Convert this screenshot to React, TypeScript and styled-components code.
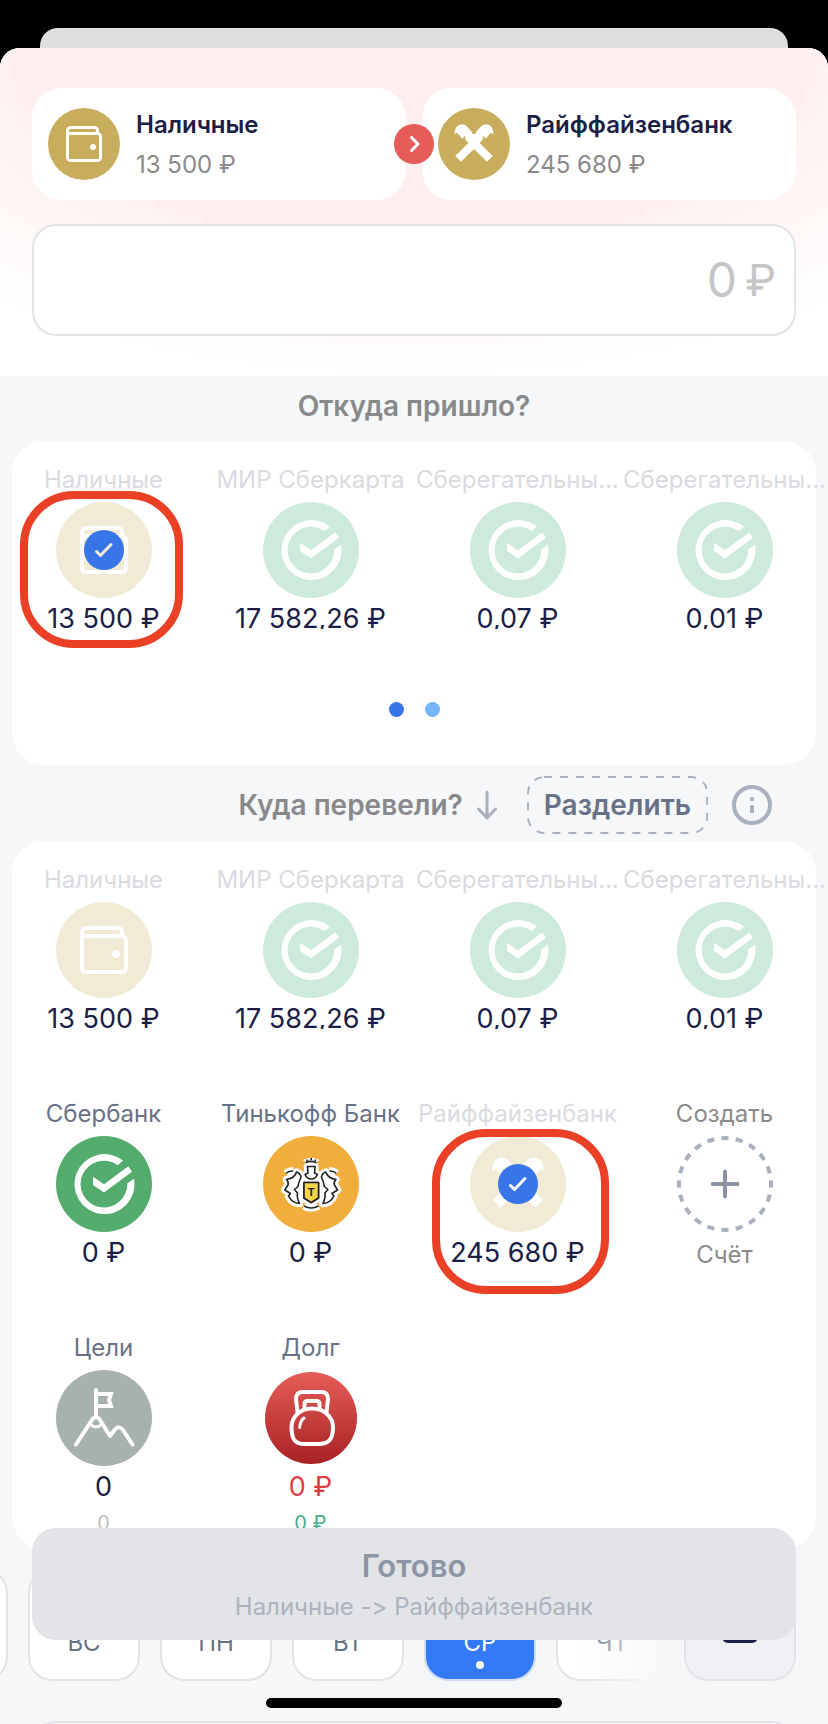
import React from "react";
import styled, { createGlobalStyle, css } from "styled-components";

const GlobalStyle = createGlobalStyle`
  * { box-sizing: border-box; }
  body {
    margin: 0;
    background: #000;
    font-family: Inter, "Noto Sans", sans-serif;
    font-variant-ligatures: none;
    font-feature-settings: "calt" 0;
    color: #1a2045;
  }
  button, input { font: inherit; font-feature-settings: inherit; color: inherit; }
  button { border: 0; padding: 0; background: none; cursor: pointer; }
`;

const Screen = styled.div`
  position: relative;
  display: flex;
  flex-direction: column;
  height: 100vh;
  padding-top: 28px;
  overflow: hidden;
  background: #000;
`;

const BackSheet = styled.div`
  flex: none;
  height: 20px;
  margin: 0 40px;
  border-radius: 18px 18px 0 0;
  background: #dfdfdf;
`;

const Sheet = styled.main`
  flex: 1;
  min-height: 0;
  overflow: hidden;
  border-radius: 20px 20px 0 0;
  background: #f6f7f9;
`;

const Header = styled.header`
  display: flex;
  flex-direction: column;
  gap: 24px;
  padding: 40px 32px;
  background: radial-gradient(ellipse 80% 100% at 50% 0, #ffeeed 0%, #ffefee 55%, #fff 100%) #fff;
`;

const Route = styled.div`
  position: relative;
  display: grid;
  grid-template-columns: 1fr 1fr;
  gap: 16px;
`;

const RouteCard = styled.button`
  display: flex;
  align-items: center;
  gap: 16px;
  height: 112px;
  padding: 0 16px;
  border-radius: 30px;
  background: #fff;
  text-align: left;
`;

const RouteText = styled.span`
  display: flex;
  flex-direction: column;
  padding-top: 2px;
  font-size: 24px;
  line-height: 40px;
  white-space: nowrap;
  color: #8a8a8c;
  strong { font-weight: 600; color: #1a2045; }
`;

const RouteArrow = styled.span`
  position: absolute;
  top: 50%;
  left: 50%;
  width: 40px;
  height: 40px;
  margin: -20px 0 0 -20px;
  border-radius: 50%;
  background: #e65c58;
  svg { display: block; }
`;

const AmountField = styled.label`
  display: flex;
  align-items: center;
  gap: 8px;
  height: 112px;
  padding: 0 18px;
  border: 2px solid #e2e3e9;
  border-radius: 24px;
  background: #fff;
  font-size: 44px;
  color: #c5c5c6;
`;

const AmountInput = styled.input`
  flex: 1;
  min-width: 0;
  padding: 0;
  border: 0;
  outline: 0;
  background: none;
  font-size: 48px;
  line-height: 60px;
  text-align: right;
  &::placeholder { color: #c5c5c6; opacity: 1; }
`;

const SectionHead = styled.div<{ $split?: boolean }>`
  display: flex;
  align-items: center;
  justify-content: ${(p) => (p.$split ? "flex-end" : "center")};
  height: ${(p) => (p.$split ? 76 : 65)}px;
  padding: ${(p) => (p.$split ? "4px 56px 0" : "0 56px 6px")};
`;

const SectionTitle = styled.h2`
  margin: 0;
  font-size: 28px;
  line-height: 36px;
  font-weight: 600;
  color: #88898b;
`;

const DownArrow = styled.svg`
  flex: none;
  margin: 0 30px 0 14px;
`;

const SplitButton = styled.button`
  position: relative;
  height: 58px;
  margin-right: 24px;
  padding: 0 17px;
  font-size: 28px;
  font-weight: 600;
  color: #687286;
`;

const DashedFrame = styled.svg`
  position: absolute;
  inset: 0;
  width: 100%;
  height: 100%;
  rect {
    width: calc(100% - 2px);
    height: calc(100% - 2px);
  }
`;

const InfoButton = styled.button`
  width: 40px;
  height: 40px;
  svg { display: block; }
`;

const Panel = styled.section<{ $paged?: boolean }>`
  margin: 0 12px;
  padding: 24px 0 ${(p) => (p.$paged ? 48 : 11)}px;
  border-radius: 32px;
  background: #fff;
`;

const AccountGrid = styled.div`
  display: grid;
  grid-template-columns: repeat(4, 1fr);
  row-gap: 70px;
  margin: 0 -12px;
`;

const Tile = styled.button`
  position: relative;
  display: flex;
  flex-direction: column;
  align-items: center;
  justify-content: flex-start;
  min-width: 0;
`;

type Tone = "normal" | "faded" | "plain";

const labelColor = { normal: "#687286", faded: "#dadbe1", plain: "#8a8b8d" };

const TileLabel = styled.span<{ $tone: Tone }>`
  height: 37px;
  font-size: 24px;
  line-height: 30px;
  white-space: nowrap;
  color: ${(p) => labelColor[p.$tone]};
`;

const TileAmount = styled.span<{ $color?: string }>`
  height: 31px;
  padding-top: 9px;
  overflow: hidden;
  font-size: 27px;
  line-height: 24px;
  white-space: nowrap;
  color: ${(p) => p.$color ?? "#1a2045"};
`;

const TileCaption = styled.span`
  height: 31px;
  font-size: 24px;
  line-height: 46px;
  color: #8a8b8d;
`;

const TileNote = styled.span<{ $color: string }>`
  margin-top: 11px;
  font-size: 20px;
  line-height: 30px;
  color: ${(p) => p.$color};
`;

const Disc = styled.span<{ $bg: string; $small?: boolean }>`
  position: relative;
  flex: none;
  display: flex;
  width: ${(p) => (p.$small ? 72 : 96)}px;
  height: ${(p) => (p.$small ? 72 : 96)}px;
  border-radius: 50%;
  background: ${(p) => p.$bg};
  svg { width: 100%; height: 100%; }
`;

const DebtDisc = styled(Disc)`
  width: 92px;
  height: 92px;
  margin: 2px 0;
`;

const Tick = styled.span`
  position: absolute;
  top: 28px;
  left: 28px;
  width: 40px;
  height: 40px;
  border-radius: 50%;
  background: #3875e9;
`;

const Marker = styled.span<{ $tall?: boolean }>`
  position: absolute;
  border: 8px solid #ea4025;
  border-radius: 54px;
  pointer-events: none;
  ${(p) =>
    p.$tall
      ? css`inset: 30px 12px auto 18px; height: 165px;`
      : css`inset: 26px 24px auto 20px; height: 157px;`}
`;

const Pager = styled.div`
  display: flex;
  justify-content: center;
  gap: 21px;
  margin-top: 73px;
`;

const Dot = styled.button<{ $active?: boolean }>`
  width: 15px;
  height: 15px;
  border-radius: 50%;
  background: ${(p) => (p.$active ? "#3875e9" : "#75b5fa")};
`;

const DateBar = styled.div`
  display: flex;
  gap: 16px;
  margin-top: 20px;
  padding-right: 32px;
`;

const Days = styled.div`
  position: relative;
  flex: 1;
  min-width: 0;
  display: flex;
  justify-content: flex-end;
  gap: 20px;
  overflow: hidden;
  &::after {
    content: "";
    position: absolute;
    inset: 0 0 0 auto;
    width: 90px;
    background: linear-gradient(90deg, #f6f7f900, #f6f7f9 90%);
  }
`;

const Day = styled.button<{ $active?: boolean }>`
  position: relative;
  flex: none;
  width: 112px;
  height: 112px;
  padding-top: 36px;
  border: 2px solid ${(p) => (p.$active ? "#cfdcf2" : "#e2e3e6")};
  border-radius: 24px;
  background: ${(p) => (p.$active ? "#347af7" : "#fff")};
  font-size: 24px;
  line-height: 30px;
  color: ${(p) => (p.$active ? "#fff" : "#687286")};
`;

const TodayDot = styled.span`
  position: absolute;
  bottom: 10px;
  left: 50%;
  width: 8px;
  height: 8px;
  margin-left: -4px;
  border-radius: 50%;
  background: #fff;
`;

const CalendarButton = styled.button`
  flex: none;
  width: 112px;
  height: 112px;
  border: 2px solid #e2e3e6;
  border-radius: 24px;
  background: #f0f1f4;
  svg { display: block; margin: auto; }
`;

const NoteCard = styled.div`
  height: 112px;
  margin: 40px 32px 0;
  border: 2px solid #e2e3e6;
  border-radius: 24px;
`;

const DoneButton = styled.button`
  position: absolute;
  right: 32px;
  bottom: 84px;
  left: 32px;
  display: flex;
  flex-direction: column;
  align-items: center;
  justify-content: center;
  height: 112px;
  padding-top: 4px;
  border-radius: 24px;
  background: #e2e4e8;
  font-size: 24px;
  line-height: 40px;
  color: #abb3bf;
  strong { font-size: 31px; line-height: 42px; font-weight: 600; color: #8c95a3; }
`;

const HomeIndicator = styled.div`
  position: absolute;
  bottom: 16px;
  left: 50%;
  width: 296px;
  height: 10px;
  margin-left: -148px;
  border-radius: 5px;
  background: #000;
`;

const Wallet = () => (
  <svg viewBox="0 0 96 96" fill="none" stroke="#fff" strokeWidth="4" aria-hidden>
    <path d="M26 34v-4a4 4 0 0 1 4-4h32a4 4 0 0 1 4 4v4M26 34h40a4 4 0 0 1 4 4v28a4 4 0 0 1-4 4H30a4 4 0 0 1-4-4z" />
    <circle cx="60" cy="52" r="4" fill="#fff" stroke="none" />
  </svg>
);

const Sber = () => (
  <svg viewBox="0 0 96 96" fill="#fff" aria-hidden>
    <path d="M67 24.5A30 30 0 1 0 78 42.7L71.3 47.3A23.4 23.4 0 1 1 61.7 29.2Z" />
    <path d="M37 40.7L48 48.3L72.3 30.3L76 35.7L48 56.4L37 49Z" />
  </svg>
);

const Raiffeisen = () => (
  <svg viewBox="0 0 96 96" fill="#fff" aria-hidden>
    <path d="M22 35C22 27 26 21.500 32 21.500C35 21.500 37.500 23 39 25L45 31.500L46 34.500H50L51 31.500L57 25C58.500 23 61 21.500 64 21.500C70 21.500 74 27 74 35L70.500 33L63.600 41L60 37L59.500 42L55.500 46.500L73 64L65.300 71.700L48 54.500L30.700 71.700L23 64L40.500 46.500L36.500 42L36 37L32.400 41L25.500 33Z" />
  </svg>
);

const TinkoffWing = () => (
  <>
    <path d="M23 37.500Q26 34.500 30 35" fill="none" />
    <path d="M33.500 36Q32 42 23.500 43.500Q26 46 25 49L21.800 54L27.500 57.500L25.500 60Q29 67 36.500 67.500Q33.500 61 34.500 57L31.500 53.500L35 50.500Q36 45 38 41Q37 37 33.500 36Z" />
  </>
);

const TinkoffLines = () => (
  <>
    <path d="M42.500 26.800Q48 24 53.500 26.800M44 23.500V25M48.200 22V24M52.400 23.500V25" fill="none" />
    <path d="M44.500 30.500H52L51.500 37L54.500 38.500Q52.500 43 48.200 43Q44 43 42 38.500L45 37Z" />
    <TinkoffWing />
    <g transform="translate(96.400 0) scale(-1 1)"><TinkoffWing /></g>
    <path d="M41 70Q48.200 74 55.500 70" fill="none" />
    <path d="M41 46.500H55.500V62L48.200 66.500L41 62Z" />
  </>
);

const Tinkoff = () => (
  <svg viewBox="0 0 96 96" strokeLinejoin="round" aria-hidden>
    <g fill="#fff" stroke="#fff" strokeWidth="7.500"><TinkoffLines /></g>
    <g fill="#fff" stroke="#202124" strokeWidth="1.600"><TinkoffLines /></g>
    <path d="M41 46.500H55.500V62L48.200 66.500L41 62Z" fill="#f3d54d" stroke="#202124" strokeWidth="1.600" />
    <text x="48.200" y="60" textAnchor="middle" fontSize="11" fontWeight="700" fill="#202124">T</text>
  </svg>
);

const Goals = () => (
  <svg viewBox="0 0 96 96" fill="none" stroke="#fff" strokeWidth="4" strokeLinecap="round" aria-hidden>
    <path d="M40 20V47M40 24H55L53 30L55 36H40" />
    <path d="M20 74.500L36 50Q40 44 44 50L54 66L59 59.500Q63 55 67 60L76.500 74.500" strokeLinejoin="round" />
    <path d="M34 54Q40 60 46 54" strokeWidth="3" />
  </svg>
);

const Kettlebell = () => (
  <svg viewBox="2 2 92 92" fill="none" stroke="#fff" strokeWidth="4" strokeLinecap="round" aria-hidden>
    <path d="M49 38.500C36 38.500 28.500 48 28.500 57C28.500 69 32 73.500 40 74H57C66 73.500 70 69 70 57C70 48 62 38.500 49 38.500Z" />
    <path d="M34.500 42L33 29C33 24 36 22 40 22H58C62 22 65 24 65 29L63.500 42" />
    <path d="M41.500 37V34Q41.500 31 44.500 31H53.500Q56.500 31 56.500 34V37" />
    <path d="M41 48Q37 51 36.700 57.500" strokeWidth="3" />
  </svg>
);

const NewAccount = () => (
  <svg viewBox="0 0 96 96" fill="none" aria-hidden>
    <circle cx="48" cy="48" r="46" stroke="#a9b0be" strokeWidth="4" pathLength="40" strokeDasharray="1 1" strokeDashoffset="0.5" />
    <path d="M48 35.500V60.500M35.500 48H60.500" stroke="#8c93a1" strokeWidth="4" strokeLinecap="round" />
  </svg>
);

const TickBadge = ({ color }: { color: string }) => (
  <Tick>
    <svg viewBox="0 0 40 40" fill="none" stroke={color} strokeWidth="3" strokeLinecap="round" strokeLinejoin="round" aria-hidden>
      <path d="M12.500 21.500L16.500 25.500L27 14.500" />
    </svg>
  </Tick>
);

interface Account {
  label: string;
  amount?: string;
  bg: string;
  icon: React.ReactNode;
  tone?: Tone;
  color?: string;
  note?: [string, string];
  picked?: string;
  tall?: boolean;
  caption?: string;
}

const paleGreen = "#cdeada";
const paleGold = "#f1ead5";

const cash: Account = { label: "Наличные", amount: "13 500 ₽", bg: paleGold, icon: <Wallet />, tone: "faded" };
const cards: Account[] = [
  { label: "МИР Сберкарта", amount: "17 582,26 ₽", bg: paleGreen, icon: <Sber />, tone: "faded" },
  { label: "Сберегательны...", amount: "0,07 ₽", bg: paleGreen, icon: <Sber />, tone: "faded" },
  { label: "Сберегательны...", amount: "0,01 ₽", bg: paleGreen, icon: <Sber />, tone: "faded" },
];

const sources: Account[] = [{ ...cash, picked: paleGold }, ...cards];

const targets: Account[] = [
  cash,
  ...cards,
  { label: "Сбербанк", amount: "0 ₽", bg: "#53ab6d", icon: <Sber /> },
  { label: "Тинькофф Банк", amount: "0 ₽", bg: "#f1ae3d", icon: <Tinkoff /> },
  { label: "Райффайзенбанк", amount: "245 680 ₽", bg: paleGold, icon: <Raiffeisen />, tone: "faded", picked: "#fff", tall: true },
  { label: "Создать", bg: "transparent", icon: <NewAccount />, tone: "plain", caption: "Счёт" },
  { label: "Цели", amount: "0", bg: "#a6b1b0", icon: <Goals />, note: ["0", "#c0c1c3"] },
  {
    label: "Долг",
    amount: "0 ₽",
    bg: "linear-gradient(#e65c58, #a82224)",
    icon: <Kettlebell />,
    color: "#de3d44",
    note: ["0 ₽", "#4cae87"],
  },
];

function AccountTile({ a }: { a: Account }) {
  const Circle = a.color ? DebtDisc : Disc;
  return (
    <Tile type="button" aria-pressed={!!a.picked}>
      <TileLabel $tone={a.tone ?? "normal"}>{a.label}</TileLabel>
      <Circle $bg={a.bg}>
        {a.icon}
        {a.picked && <TickBadge color={a.picked} />}
      </Circle>
      {a.amount && <TileAmount $color={a.color}>{a.amount}</TileAmount>}
      {a.caption && <TileCaption>{a.caption}</TileCaption>}
      {a.note && <TileNote $color={a.note[1]}>{a.note[0]}</TileNote>}
      {a.picked && <Marker $tall={a.tall} />}
    </Tile>
  );
}

const days = ["СБ", "ВС", "ПН", "ВТ", "СР", "ЧТ"];

export default function App() {
  return (
    <Screen>
      <GlobalStyle />
      <BackSheet />
      <Sheet>
        <Header>
          <Route>
            <RouteCard type="button">
              <Disc $bg="#c8ad5c" $small><Wallet /></Disc>
              <RouteText><strong>Наличные</strong><span>13 500 ₽</span></RouteText>
            </RouteCard>
            <RouteCard type="button">
              <Disc $bg="#c8ad5c" $small><Raiffeisen /></Disc>
              <RouteText><strong>Райффайзенбанк</strong><span>245 680 ₽</span></RouteText>
            </RouteCard>
            <RouteArrow>
              <svg width="40" height="40" viewBox="0 0 40 40" fill="none" stroke="#fff" strokeWidth="3" strokeLinecap="round" strokeLinejoin="round" aria-hidden>
                <path d="M17.500 13.500L24 20L17.500 26.500" />
              </svg>
            </RouteArrow>
          </Route>
          <AmountField>
            <AmountInput placeholder="0" inputMode="decimal" aria-label="Сумма" />
            <span>₽</span>
          </AmountField>
        </Header>

        <SectionHead><SectionTitle>Откуда пришло?</SectionTitle></SectionHead>
        <Panel $paged>
          <AccountGrid>
            {sources.map((a, i) => <AccountTile key={i} a={a} />)}
          </AccountGrid>
          <Pager>
            <Dot type="button" $active aria-label="Страница 1" />
            <Dot type="button" aria-label="Страница 2" />
          </Pager>
        </Panel>

        <SectionHead $split>
          <SectionTitle>Куда перевели?</SectionTitle>
          <DownArrow width="20" height="30" viewBox="0 0 20 30" fill="none" stroke="#a9b0be" strokeWidth="3" strokeLinecap="round" strokeLinejoin="round" aria-hidden>
            <path d="M10 2V28M1.500 19L10 28L18.500 19" />
          </DownArrow>
          <SplitButton type="button">
            <DashedFrame fill="none" stroke="#a9b0be" strokeWidth="2" strokeDasharray="8 8" aria-hidden>
              <rect x="1" y="1" rx="16" />
            </DashedFrame>
            Разделить
          </SplitButton>
          <InfoButton type="button" aria-label="Информация">
            <svg width="40" height="40" viewBox="0 0 40 40" fill="#a9b0be" aria-hidden>
              <circle cx="20" cy="20" r="18" fill="none" stroke="#a9b0be" strokeWidth="4" />
              <rect x="18" y="12" width="4" height="4" rx="1" />
              <rect x="18" y="20" width="4" height="8" rx="1" />
            </svg>
          </InfoButton>
        </SectionHead>
        <Panel>
          <AccountGrid>
            {targets.map((a, i) => <AccountTile key={i} a={a} />)}
          </AccountGrid>
        </Panel>

        <DateBar>
          <Days>
            {days.map((d) => (
              <Day key={d} type="button" $active={d === "СР"}>
                {d}
                {d === "СР" && <TodayDot />}
              </Day>
            ))}
          </Days>
          <CalendarButton type="button" aria-label="Календарь">
            <svg width="40" height="44" viewBox="0 0 40 44" fill="none" stroke="#1a2045" strokeWidth="4" aria-hidden>
              <rect x="4" y="6" width="32" height="32" rx="4" />
            </svg>
          </CalendarButton>
        </DateBar>
        <NoteCard />
      </Sheet>

      <DoneButton type="button">
        <strong>Готово</strong>
        <span>Наличные -&gt; Райффайзенбанк</span>
      </DoneButton>
      <HomeIndicator />
    </Screen>
  );
}
